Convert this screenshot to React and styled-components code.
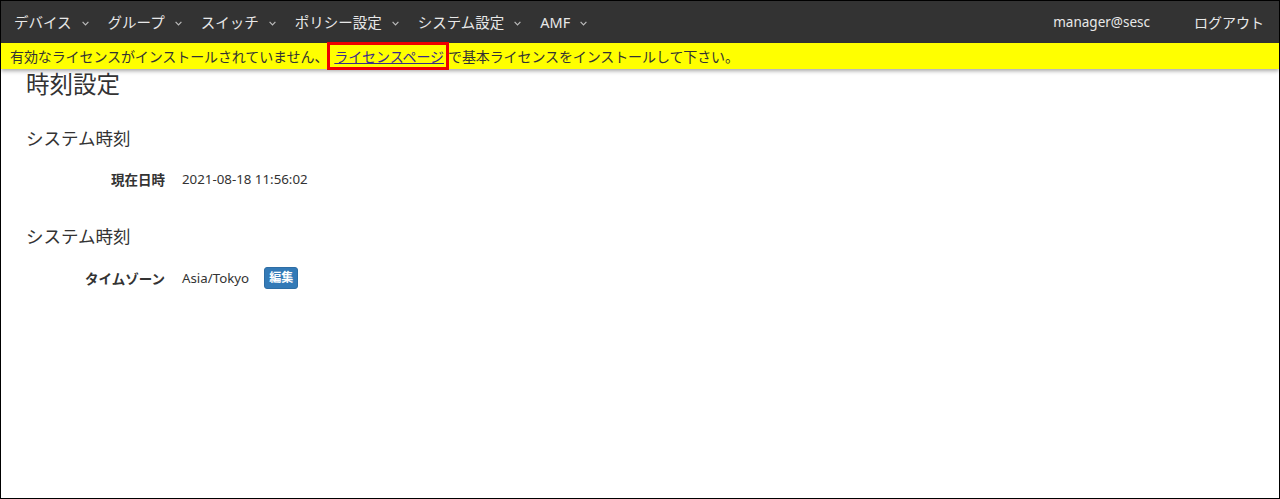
import React from 'react';
import styled, { createGlobalStyle } from 'styled-components';

const NAV_ITEMS = ['デバイス', 'グループ', 'スイッチ', 'ポリシー設定', 'システム設定', 'AMF'];

const GlobalStyle = createGlobalStyle`
  html, body {
    margin: 0;
    padding: 0;
    background: #fff;
  }
  body {
    font-family: "Noto Sans", "Noto Sans CJK JP", sans-serif;
    color: #333;
  }
`;

function Chevron() {
  return (
    <ChevronSvg viewBox="0 0 7 5" aria-hidden="true">
      <path d="M0.6 0.9 L3.5 3.8 L6.4 0.9" fill="none" stroke="currentColor" strokeWidth="1.2" />
    </ChevronSvg>
  );
}

function App() {
  return (
    <Frame>
      <GlobalStyle />
      <NavBar>
        <NavLeft>
          {NAV_ITEMS.map(item => (
            <NavItem key={item}>
              {item}
              <Chevron />
            </NavItem>
          ))}
        </NavLeft>
        <NavRight>
          <NavUser>manager@sesc</NavUser>
          <NavLink>ログアウト</NavLink>
        </NavRight>
      </NavBar>

      <Notice>
        有効なライセンスがインストールされていません、
        <NoticeLink href="#">ライセンスページ</NoticeLink>
        で基本ライセンスをインストールして下さい。
      </Notice>

      <Content>
        <PageTitle>時刻設定</PageTitle>

        <Section>
          <SectionTitle>システム時刻</SectionTitle>
          <Fields>
            <Label>現在日時</Label>
            <Value>2021-08-18 11:56:02</Value>
          </Fields>
        </Section>

        <Section>
          <SectionTitle>システム時刻</SectionTitle>
          <Fields>
            <Label>タイムゾーン</Label>
            <Value>
              Asia/Tokyo
              <EditButton type="button">編集</EditButton>
            </Value>
          </Fields>
        </Section>
      </Content>
    </Frame>
  );
}

const Frame = styled.div`
  box-sizing: border-box;
  width: 1280px;
  height: 499px;
  border: 1px solid #000;
  overflow: hidden;
  background: #fff;
`;

const NavBar = styled.nav`
  height: 42px;
  background: #333;
  display: flex;
  align-items: center;
  justify-content: space-between;
  padding: 0 15px 0 13px;
  font-family: "Noto Sans", "Noto Sans CJK JP", sans-serif;
  font-size: 14.5px;
  color: #e8e8e8;
`;

const NavLeft = styled.div`
  display: flex;
  align-items: center;
  gap: 19px;
`;

const NavItem = styled.div`
  display: flex;
  align-items: center;
  gap: 10px;
  line-height: 1;
  white-space: nowrap;
`;

const ChevronSvg = styled.svg`
  width: 7px;
  height: 5px;
  color: #bbb;
  margin-top: 2px;
`;

const NavRight = styled.div`
  display: flex;
  align-items: center;
  gap: 44px;
`;

const NavUser = styled.span`
  font-size: 13.5px;
`;

const NavLink = styled.span`
  font-size: 14px;
`;

const Notice = styled.div`
  height: 26px;
  background: #ffff00;
  display: flex;
  align-items: center;
  padding-left: 9px;
  font-size: 14px;
  letter-spacing: -0.1px;
  color: #333;
  white-space: nowrap;
  box-shadow: 0 2px 4px rgba(0, 0, 0, 0.35);
  position: relative;
`;

const NoticeLink = styled.a`
  color: #3a2a8c;
  text-decoration: underline;
  outline: 3px solid #ee0000;
  outline-offset: -1px;
  padding: 2px 3px 2px 5px;
  margin: 0 1px;
`;

const Content = styled.main`
  padding: 0 25px;
`;

const PageTitle = styled.h1`
  margin: 1px 0 0;
  font-size: 23.5px;
  font-weight: 400;
  line-height: 1.2;
  color: #333;
`;

const Section = styled.section`
  margin-top: 30px;

  & + & {
    margin-top: 37px;
  }
`;

const SectionTitle = styled.h3`
  margin: 0;
  font-size: 17.5px;
  font-weight: 400;
  line-height: 1.2;
  color: #333;
`;

const Fields = styled.dl`
  display: grid;
  grid-template-columns: 139px 1fr;
  column-gap: 17px;
  margin: 20px 0 0;
  align-items: center;
`;

const Label = styled.dt`
  text-align: right;
  font-weight: 700;
  font-size: 13.5px;
  color: #333;
`;

const Value = styled.dd`
  margin: 0;
  font-size: 13.3px;
  color: #333;
  display: flex;
  align-items: center;
  gap: 15px;
`;

const EditButton = styled.button`
  font-family: inherit;
  font-size: 12px;
  font-weight: 700;
  color: #fff;
  background: #337ab7;
  border: 1px solid #2e6da4;
  border-radius: 3px;
  padding: 1px 4px;
  height: 22px;
  line-height: 1;
`;

export default App;
